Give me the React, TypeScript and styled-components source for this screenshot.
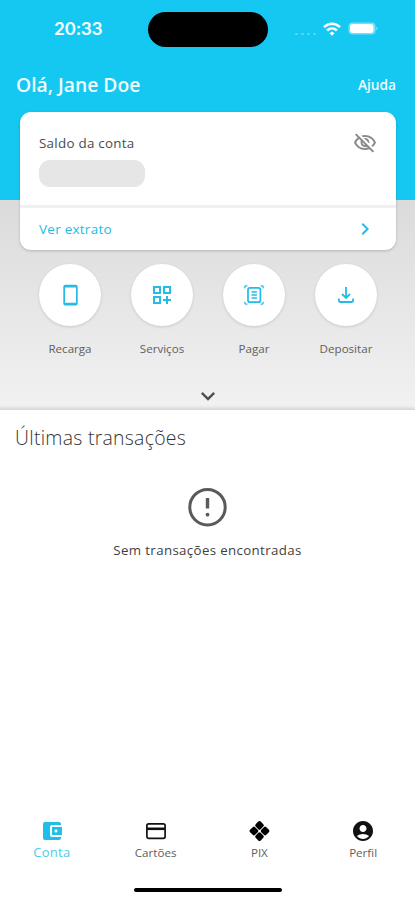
import React from "react";
import styled, { createGlobalStyle } from "styled-components";
import {
  MdAccountBalanceWallet,
  MdAccountCircle,
  MdKeyboardArrowDown,
  MdKeyboardArrowRight,
  MdOutlineDashboardCustomize,
  MdOutlineVisibilityOff,
} from "react-icons/md";

const cyan = "#15c8f2";
const accent = "#22bce6";

const GlobalStyle = createGlobalStyle`
  * { box-sizing: border-box; }
  body { margin: 0; background: #fff; font-family: "Open Sans", sans-serif; }
  svg { display: block; flex: none; }
`;

const Screen = styled.div`
  width: 415px;
  height: 900px;
  display: flex;
  flex-direction: column;
  overflow: hidden;
  background: #fff;
`;

const Top = styled.section`
  height: 410px;
  flex: none;
  display: flex;
  flex-direction: column;
  background:
    linear-gradient(${cyan}, ${cyan}) 0 0 / 100% 200px no-repeat,
    linear-gradient(#dbdbdb 200px, #f1f1f1 404px, #efefef 406px, #d4d4d4 410px);
`;

const StatusBar = styled.div`
  height: 58px;
  display: grid;
  grid-template-columns: 148px 120px 1fr;
  align-items: center;
  color: #f0fcff;
`;

const Clock = styled.time`
  padding-left: 54px;
  font: 600 17.5px/20px Inter, sans-serif;
  letter-spacing: -0.4px;
`;

const Island = styled.div`
  height: 35px;
  border-radius: 18px;
  background: #000;
`;

const StatusIcons = styled.div`
  display: flex;
  align-items: center;
  padding-left: 27px;
  height: 20px;
`;

const Dots = styled.div`
  display: flex;
  gap: 3px;
  width: 28px;
  padding-top: 9px;
`;

const Dot = styled.i`
  width: 3px;
  height: 2px;
  border-radius: 1px;
  background: #5ad9f5;
`;

const Greeting = styled.header`
  height: 54px;
  display: flex;
  align-items: center;
  justify-content: space-between;
  padding: 0 19px 0 16px;
  color: #effcff;
`;

const Name = styled.h1`
  margin: 0;
  font-size: 19.3px;
  line-height: 26px;
  font-weight: 600;
`;

const Help = styled.a`
  font-size: 13.7px;
  font-weight: 600;
  line-height: 20px;
`;

const Card = styled.section`
  height: 138px;
  margin: 0 19px 0 20px;
  border-radius: 11px;
  background: #fff;
  box-shadow: 0 1px 3px rgba(0, 0, 0, 0.2);
`;

const Balance = styled.div`
  height: 96px;
  display: flex;
  justify-content: space-between;
  padding: 19px 19px 0;
  border-bottom: 3px solid #f0f0f0;
  color: #8a8a8a;
`;

const BalanceLabel = styled.div`
  font-size: 13.4px;
  line-height: 24px;
  letter-spacing: 0.26px;
  color: #4c4c4c;
`;

const HiddenAmount = styled.div`
  width: 106px;
  height: 27px;
  margin-top: 5px;
  border-radius: 11px;
  background: #e6e6e6;
`;

const Statement = styled.a`
  height: 42px;
  display: flex;
  align-items: center;
  justify-content: space-between;
  padding: 0 19px 0;
  font-size: 13.5px;
  letter-spacing: 0.25px;
  color: ${accent};
`;

const Actions = styled.nav`
  display: grid;
  grid-template-columns: repeat(4, 92px);
  margin: 14px 0 0 24px;
`;

const Action = styled.button`
  border: 0;
  padding: 0;
  background: none;
  display: flex;
  flex-direction: column;
  align-items: center;
  gap: 14px;
  font: 400 11.6px/18px "Open Sans", sans-serif;
  color: #606060;
`;

const Circle = styled.span`
  width: 62px;
  height: 62px;
  border-radius: 50%;
  display: flex;
  align-items: center;
  justify-content: center;
  background: #fff;
  color: ${accent};
  box-shadow: 0 1px 3px rgba(0, 0, 0, 0.14);
`;

const Expand = styled.div`
  display: flex;
  justify-content: center;
  margin-top: 24px;
  color: #505050;
`;

const Transactions = styled.main`
  flex: 1;
  display: flex;
  flex-direction: column;
  align-items: center;
`;

const Title = styled.h2`
  align-self: flex-start;
  margin: 13px 0 0 15px;
  font-size: 19.4px;
  line-height: 30px;
  font-weight: 300;
  letter-spacing: 0.28px;
  color: #333;
`;

const Empty = styled.div`
  display: flex;
  flex-direction: column;
  align-items: center;
  gap: 10px;
  margin-top: 31px;
  color: #5a5a5a;
`;

const EmptyText = styled.p`
  margin: 0;
  font-size: 13.3px;
  line-height: 20px;
  letter-spacing: 0.35px;
  color: #3f3f3f;
`;

const Tabs = styled.nav`
  height: 69px;
  display: grid;
  grid-template-columns: repeat(4, 1fr);
`;

const Tab = styled.a<{ $active?: boolean }>`
  display: flex;
  flex-direction: column;
  align-items: center;
  color: ${(p) => (p.$active ? "#20bfe9" : "#111")};
`;

const TabLabel = styled.span<{ $active?: boolean }>`
  margin-top: ${(p) => (p.$active ? "-1px" : "0")};
  font-size: ${(p) => (p.$active ? "13px" : "11.6px")};
  letter-spacing: ${(p) => (p.$active ? "0.3px" : "0")};
  line-height: 20px;
  color: ${(p) => (p.$active ? "#4bcbed" : "#606060")};
`;

const HomeIndicator = styled.div`
  flex: none;
  width: 148px;
  height: 4px;
  margin: 0 0 8px 134px;
  border-radius: 2px;
  background: #000;
`;

const Wifi = () => (
  <svg width="18" height="14" viewBox="0 0 18 14" fill="none" stroke="#fff" strokeWidth="2.5">
    <path d="M1 5.1C5.6.5 12.4.5 17 5.1" />
    <path d="M4.1 8.5c2.9-2.8 6.9-2.8 9.8 0" />
    <path d="M9 9.5 6.5 11.3 9 13.8l2.5-2.5Z" fill="#fff" stroke="none" />
  </svg>
);

const BatteryIcon = styled.svg`
  margin: -1px 0 0 7px;
`;

const Battery = () => (
  <BatteryIcon width="31" height="13" viewBox="0 0 31 13">
    <rect x=".5" y=".5" width="27" height="12" rx="4" fill="#75dff7" />
    <rect x="2" y="2" width="23.5" height="9" rx="3" fill="#fff" />
    <path d="M28.5 4.5q2 2 0 4Z" fill="#a2eafa" />
  </BatteryIcon>
);

const Phone = () => (
  <svg width="24" height="24" viewBox="0 0 24 24">
    <path
      fill="currentColor"
      fillRule="evenodd"
      d="M7.3 1.8h10.4a2 2 0 0 1 2 2v16.7a2 2 0 0 1-2 2H7.3a2 2 0 0 1-2-2V3.8a2 2 0 0 1 2-2ZM7 4.4v15.4h11V4.4Z"
    />
  </svg>
);

const Scan = () => (
  <svg width="24" height="24" viewBox="0 0 24 24" fill="none" stroke="currentColor" strokeWidth="1.7">
    <path
      d="M2.6 5.2c0-1.8.8-2.6 2.8-2.6M18.6 2.6c2 0 2.8.8 2.8 2.6M2.6 18.8c0 1.8.8 2.6 2.8 2.6M18.6 21.4c2 0 2.8-.8 2.8-2.6"
      opacity=".75"
    />
    <rect x="6" y="4.8" width="12.4" height="14.4" rx="2" />
    <path d="M9.5 9h5.4M9.5 12h5.4M9.5 15h5.4" />
  </svg>
);

const Download = () => (
  <svg width="24" height="24" viewBox="0 0 24 24" fill="none" stroke="currentColor" strokeWidth="1.8">
    <path d="M12 4v10.5M8 11l4 4 4-4M4.9 15.5v1.8c0 1 .7 1.7 1.7 1.7h10.8c1 0 1.7-.7 1.7-1.7v-1.8" />
  </svg>
);

const Alert = () => (
  <svg width="46" height="46" viewBox="0 0 46 46" fill="none" stroke="currentColor">
    <circle cx="23.5" cy="23.2" r="17.7" strokeWidth="3" />
    <path d="M23.5 14v10.5" strokeWidth="3.4" />
    <circle cx="23.5" cy="30.7" r="1.9" fill="currentColor" stroke="none" />
  </svg>
);

const CreditCard = () => (
  <svg width="24" height="24" viewBox="0 0 24 24" fill="none" stroke="currentColor">
    <rect x="2.9" y="4.8" width="18.2" height="14.6" rx="1.8" strokeWidth="1.7" />
    <path d="M3 9.8h18" strokeWidth="2.6" />
  </svg>
);

const Pix = () => (
  <svg width="24" height="24" viewBox="0 0 24 24" fill="#000">
    <g transform="rotate(45 12.5 12)">
      <rect x="5" y="4.5" width="7.1" height="7.1" rx="1.7" />
      <rect x="12.9" y="4.5" width="7.1" height="7.1" rx="1.7" />
      <rect x="5" y="12.4" width="7.1" height="7.1" rx="1.7" />
      <rect x="12.9" y="12.4" width="7.1" height="7.1" rx="1.7" />
    </g>
  </svg>
);

const actions = [
  { label: "Recarga", icon: <Phone /> },
  { label: "Serviços", icon: <MdOutlineDashboardCustomize size={24} /> },
  { label: "Pagar", icon: <Scan /> },
  { label: "Depositar", icon: <Download /> },
];

const tabs = [
  { label: "Conta", icon: <MdAccountBalanceWallet size={24} />, active: true },
  { label: "Cartões", icon: <CreditCard /> },
  { label: "PIX", icon: <Pix /> },
  { label: "Perfil", icon: <MdAccountCircle size={24} /> },
];

export default function App() {
  return (
    <Screen>
      <GlobalStyle />
      <Top>
        <StatusBar>
          <Clock>20:33</Clock>
          <Island />
          <StatusIcons>
            <Dots><Dot /><Dot /><Dot /><Dot /></Dots>
            <Wifi />
            <Battery />
          </StatusIcons>
        </StatusBar>
        <Greeting>
          <Name>Olá, Jane Doe</Name>
          <Help>Ajuda</Help>
        </Greeting>
        <Card>
          <Balance>
            <div>
              <BalanceLabel>Saldo da conta</BalanceLabel>
              <HiddenAmount />
            </div>
            <MdOutlineVisibilityOff size={24} />
          </Balance>
          <Statement>
            Ver extrato
            <MdKeyboardArrowRight size={24} />
          </Statement>
        </Card>
        <Actions>
          {actions.map((a) => (
            <Action key={a.label}>
              <Circle>{a.icon}</Circle>
              {a.label}
            </Action>
          ))}
        </Actions>
        <Expand><MdKeyboardArrowDown size={28} /></Expand>
      </Top>
      <Transactions>
        <Title>Últimas transações</Title>
        <Empty>
          <Alert />
          <EmptyText>Sem transações encontradas</EmptyText>
        </Empty>
      </Transactions>
      <Tabs>
        {tabs.map((t) => (
          <Tab key={t.label} $active={t.active}>
            {t.icon}
            <TabLabel $active={t.active}>{t.label}</TabLabel>
          </Tab>
        ))}
      </Tabs>
      <HomeIndicator />
    </Screen>
  );
}
